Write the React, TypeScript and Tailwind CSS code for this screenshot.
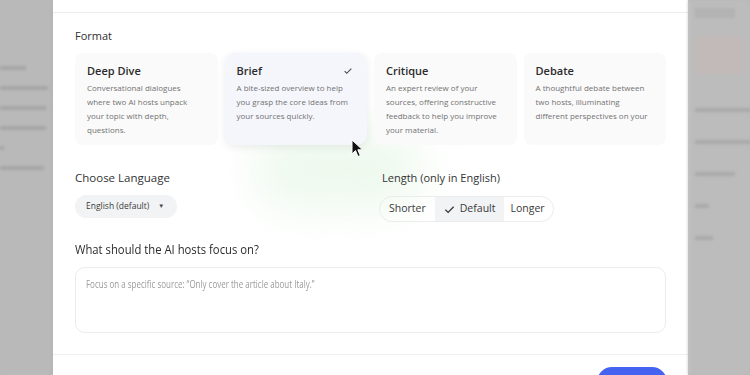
import React from 'react';

const formats = [
  {
    title: 'Deep Dive',
    desc: 'Conversational dialogues where two AI hosts unpack your topic with depth, questions.',
  },
  {
    title: 'Brief',
    desc: 'A bite-sized overview to help you grasp the core ideas from your sources quickly.',
    selected: true,
  },
  {
    title: 'Critique',
    desc: 'An expert review of your sources, offering constructive feedback to help you improve your material.',
  },
  {
    title: 'Debate',
    desc: 'A thoughtful debate between two hosts, illuminating different perspectives on your',
  },
];

// blurred page behind the dialog
function BackdropLeft() {
  return (
    <div className="w-[53px] shrink-0 bg-[#b9b9b9] border-r border-[#aaaaaa] flex flex-col gap-[16px] pt-[66px] blur-[1.5px]">
      <div className="h-[4px] w-[26px] bg-[#a5a5a5]" />
      <div className="h-[4px] w-[48px] bg-[#a5a5a5]" />
      <div className="h-[4px] w-[46px] bg-[#a5a5a5]" />
      <div className="h-[4px] w-[46px] bg-[#a5a5a5]" />
      <div className="h-[4px] w-[4px] bg-[#a5a5a5]" />
      <div className="h-[4px] w-[44px] bg-[#a5a5a5]" />
    </div>
  );
}

function BackdropRight() {
  return (
    <div className="w-[62px] shrink-0 bg-[#bcbcbc] border-l border-[#d0d0d0] flex flex-col pl-[6px] blur-[1.5px]">
      <div className="h-[10px] w-[40px] mt-[8px] bg-[#b3b3b3]" />
      <div className="h-[38px] w-[48px] mt-[18px] bg-[#c2b9b9]" />
      <div className="h-[4px] w-[56px] mt-[34px] bg-[#a9a9a9]" />
      <div className="h-[4px] w-[56px] mt-[28px] bg-[#a9a9a9]" />
      <div className="h-[4px] w-[40px] mt-[28px] bg-[#a9a9a9]" />
      <div className="h-[4px] w-[14px] mt-[28px] bg-[#a9a9a9]" />
      <div className="h-[4px] w-[18px] mt-[28px] bg-[#a9a9a9]" />
    </div>
  );
}

function Cursor() {
  return (
    <svg className="absolute left-[298px] top-[139px]" width="13" height="19" viewBox="0 0 13 19">
      <path d="M1 1 L1 15 L4.5 11.5 L7 17.5 L9.3 16.5 L6.8 10.8 L11.5 10.8 Z" fill="#111" stroke="#fff" strokeWidth="1" />
    </svg>
  );
}

export default function App() {
  return (
    <div
      className="w-[750px] h-[375px] overflow-hidden flex bg-[#b9b9b9]"
      style={{ fontFamily: '"Open Sans", "Noto Sans", Arial, sans-serif' }}
    >
      <BackdropLeft />

      <div className="relative flex-1 bg-white flex flex-col">
        {/* soft green glow under the selected card */}
        <div className="absolute left-[200px] top-[130px] w-[170px] h-[80px] rounded-full bg-[#eef9ee] blur-[22px] pointer-events-none" />

        <div className="h-[13px] shrink-0 border-b border-[#ececec]" />

        <div className="relative shrink-0 px-[22px] pt-[15px]">
          <div className="text-[11px] leading-[16px] text-[#2f2f2f]">Format</div>

          <div className="mt-[9px] grid grid-cols-4 gap-[7px]">
            {formats.map((f) => (
              <div
                key={f.title}
                className={
                  f.selected
                    ? 'h-[92px] rounded-[10px] bg-[#f5f6fb] shadow-[0_2px_8px_rgba(0,0,0,0.08)] pl-[12px] pr-[18px] pt-[9px]'
                    : 'h-[92px] rounded-[8px] bg-[#fafafa] pl-[12px] pr-[18px] pt-[9px]'
                }
              >
                <div className="flex items-center justify-between">
                  <span className="text-[11px] leading-[18px] font-semibold text-[#2b2b2b]">{f.title}</span>
                  {f.selected && (
                    <svg width="10" height="10" viewBox="0 0 24 24" className="-mr-[4px]">
                      <path d="M4 12.5l5 5L20 6.5" fill="none" stroke="#444" strokeWidth="2.6" />
                    </svg>
                  )}
                </div>
                <p className="mt-[1px] text-[8px] leading-[14px] text-[#727272]">{f.desc}</p>
              </div>
            ))}
          </div>

          <div className="mt-[24px] grid grid-cols-[304px_1fr]">
            <div>
              <div className="text-[11.5px] leading-[18px] text-[#333]">Choose Language</div>
              <div className="mt-[8px] inline-flex items-center gap-[9px] h-[23px] rounded-full bg-[#f2f3f5] pl-[11px] pr-[13px] text-[8.5px] text-[#3a3a3a]">
                English (default)
                <span className="text-[6px] text-[#444]">▼</span>
              </div>
            </div>
            <div>
              <div className="pl-[3px] text-[11px] leading-[18px] text-[#333]">Length (only in English)</div>
              <div className="mt-[9px] inline-flex h-[26px] items-stretch rounded-full border border-[#ececec] overflow-hidden text-[10.5px] text-[#3a3a3a]">
                <span className="flex items-center px-[9px]">Shorter</span>
                <span className="flex items-center gap-[5px] px-[9px] bg-[#f1f3f5]">
                  <svg width="11" height="11" viewBox="0 0 24 24">
                    <path d="M3 12.5l6 6L21 6" fill="none" stroke="#333" strokeWidth="2.6" />
                  </svg>
                  Default
                </span>
                <span className="flex items-center px-[6px] pr-[8px]">Longer</span>
              </div>
            </div>
          </div>

          <div className="mt-[20px] text-[12px] leading-[16px] font-medium text-[#2b2b2b] scale-x-[0.94] origin-left whitespace-nowrap">
            What should the AI hosts focus on?
          </div>
          <div className="mt-[9px] h-[66px] rounded-[10px] border border-[#ececec] px-[10px] pt-[9px] text-[10.5px] text-[#9a9a9a]">
            <div className="scale-x-[0.76] origin-left whitespace-nowrap">
              Focus on a specific source: “Only cover the article about Italy.”
            </div>
          </div>
        </div>

        <div className="mt-[21px] shrink-0 border-t border-[#efefef] flex justify-end pr-[21px] pt-[12px]">
          <div className="w-[70px] h-[30px] rounded-full bg-[#4563f0]" />
        </div>

        <Cursor />
      </div>

      <BackdropRight />
    </div>
  );
}
